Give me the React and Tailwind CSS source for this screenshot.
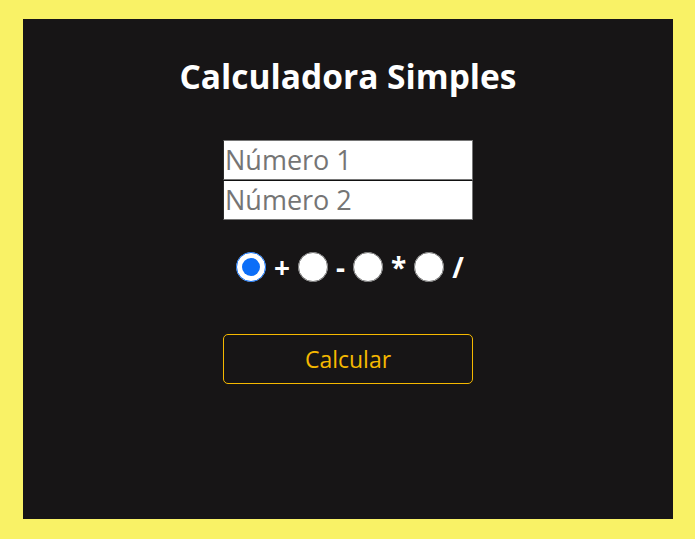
import { useState } from 'react';

const ops = ['+', '-', '*', '/'];

export default function App() {
    const [op, setOp] = useState('+');
    return (
        <div className="min-h-[539px] bg-[#f9f266] pt-[19px] pb-[20px] pl-[23px] pr-[22px]" style={{ fontFamily: '"Open Sans", "Noto Sans", sans-serif' }}>
            <div className="h-[500px] bg-[#171516] flex flex-col items-center pt-[35px]">
                <h1 className="text-[33.5px] leading-[45px] font-bold text-white">Calculadora Simples</h1>
                <div className="mt-[41px] flex flex-col w-[250px]">
                    <input placeholder="Número 1" className="h-[40px] bg-white border border-[#767676] border-l-[#2a2a2a] px-[1px] text-[27px] text-black placeholder:text-[#757575] outline-none" />
                    <input placeholder="Número 2" className="h-[40px] bg-white border border-[#767676] border-l-[#2a2a2a] border-t-[#111] px-[1px] text-[27px] text-black placeholder:text-[#757575] outline-none" />
                </div>
                <div className="mt-[32px] flex items-center gap-[8px] h-[30px] pl-[4px]">
                    {ops.map((o) => (
                        <label key={o} className="flex items-center gap-[8px] text-white text-[28px] font-bold leading-none">
                            <input type="radio" name="op" checked={op === o} onChange={() => setOp(o)} className="w-[30px] h-[30px] m-0 accent-[#0b6ef8]" />
                            <span>{o}</span>
                        </label>
                    ))}
                </div>
                <button className="mt-[52px] w-[250px] h-[50px] rounded-[5px] border border-[#f5b800] text-[#f5b800] text-[23px]">Calcular</button>
            </div>
        </div>
    );
}
